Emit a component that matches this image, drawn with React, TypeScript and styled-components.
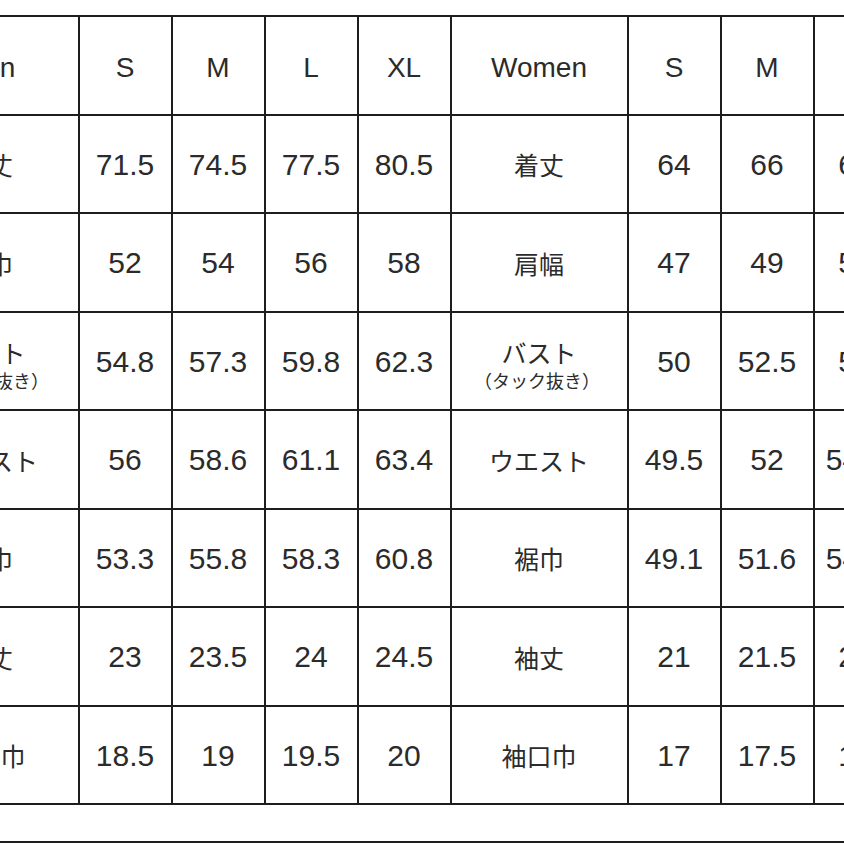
import React from 'react';
import styled, { createGlobalStyle } from 'styled-components';

const GlobalStyle = createGlobalStyle`
  html, body {
    margin: 0;
    padding: 0;
    background: #ffffff;
  }
  body {
    font-family: "Liberation Sans", "Noto Sans CJK JP", sans-serif;
    color: #2b2b2b;
  }
`;

const Page = styled.div`
  width: 844px;
  height: 844px;
  overflow: hidden;
  background: #ffffff;
`;

// Men label | S M L XL | Women label | S M L XL  (cropped on both sides)
const Chart = styled.div`
  display: grid;
  grid-template-columns: 181px repeat(4, 93px) 177px 93px 93px 83px 93px;
  grid-auto-rows: 98.5px;
  width: max-content;
  margin: 15px 0 0 -103.5px;
  border-top: 2px solid #1d1d1d;
  border-left: 2px solid #1d1d1d;
`;

const Cell = styled.div<{ $kind: 'head' | 'label' | 'value' }>`
  box-sizing: border-box;
  display: flex;
  flex-direction: column;
  align-items: center;
  justify-content: center;
  gap: 6px;
  border-right: 2px solid #1d1d1d;
  border-bottom: 2px solid #1d1d1d;
  white-space: nowrap;
  font-size: ${(p) => (p.$kind === 'head' ? '28px' : p.$kind === 'label' ? '25px' : '30px')};
  font-family: ${(p) =>
    p.$kind === 'label'
      ? '"Noto Sans CJK JP", "Liberation Sans", sans-serif'
      : '"Liberation Sans", "Noto Sans CJK JP", sans-serif'};
  padding-top: ${(p) => (p.$kind === 'head' ? '6px' : '2px')};
  line-height: 1;
`;

const LabelMain = styled.span`
  font-size: 25px;
  line-height: 1;
  margin-top: -4px;
`;

const LabelNote = styled.span`
  font-size: 18px;
  line-height: 1;
  margin-left: -4px;
  margin-bottom: -10px;
`;

const NextSection = styled.div`
  margin-top: 36px;
  border-top: 2px solid #1d1d1d;
  height: 40px;
`;

type Row = {
  men: string;
  menValues: string[];
  women: string;
  womenValues: string[];
  note?: string;
};

const sizes = ['S', 'M', 'L', 'XL'];

const rows: Row[] = [
  { men: '着丈', menValues: ['71.5', '74.5', '77.5', '80.5'], women: '着丈', womenValues: ['64', '66', '68', '70'] },
  { men: '肩巾', menValues: ['52', '54', '56', '58'], women: '肩幅', womenValues: ['47', '49', '51', '53'] },
  {
    men: 'バスト',
    menValues: ['54.8', '57.3', '59.8', '62.3'],
    women: 'バスト',
    womenValues: ['50', '52.5', '55', '57.5'],
    note: '（タック抜き）',
  },
  { men: 'ウエスト', menValues: ['56', '58.6', '61.1', '63.4'], women: 'ウエスト', womenValues: ['49.5', '52', '54.5', '57'] },
  { men: '裾巾', menValues: ['53.3', '55.8', '58.3', '60.8'], women: '裾巾', womenValues: ['49.1', '51.6', '54.1', '56.6'] },
  { men: '袖丈', menValues: ['23', '23.5', '24', '24.5'], women: '袖丈', womenValues: ['21', '21.5', '22', '22.5'] },
  { men: '袖口巾', menValues: ['18.5', '19', '19.5', '20'], women: '袖口巾', womenValues: ['17', '17.5', '18', '18.5'] },
];

const Label: React.FC<{ text: string; note?: string }> = ({ text, note }) => (
  <Cell $kind="label">
    {note ? (
      <>
        <LabelMain>{text}</LabelMain>
        <LabelNote>{note}</LabelNote>
      </>
    ) : (
      text
    )}
  </Cell>
);

const App: React.FC = () => {
  return (
    <>
      <GlobalStyle />
      <Page>
        <Chart>
          <Cell $kind="head">Men</Cell>
          {sizes.map((s) => (
            <Cell key={'m' + s} $kind="head">{s}</Cell>
          ))}
          <Cell $kind="head">Women</Cell>
          {sizes.map((s) => (
            <Cell key={'w' + s} $kind="head">{s}</Cell>
          ))}

          {rows.map((row, i) => (
            <React.Fragment key={i}>
              <Label text={row.men} note={row.note} />
              {row.menValues.map((v, j) => (
                <Cell key={'mv' + j} $kind="value">{v}</Cell>
              ))}
              <Label text={row.women} note={row.note} />
              {row.womenValues.map((v, j) => (
                <Cell key={'wv' + j} $kind="value">{v}</Cell>
              ))}
            </React.Fragment>
          ))}
        </Chart>
        <NextSection />
      </Page>
    </>
  );
};

export default App;
